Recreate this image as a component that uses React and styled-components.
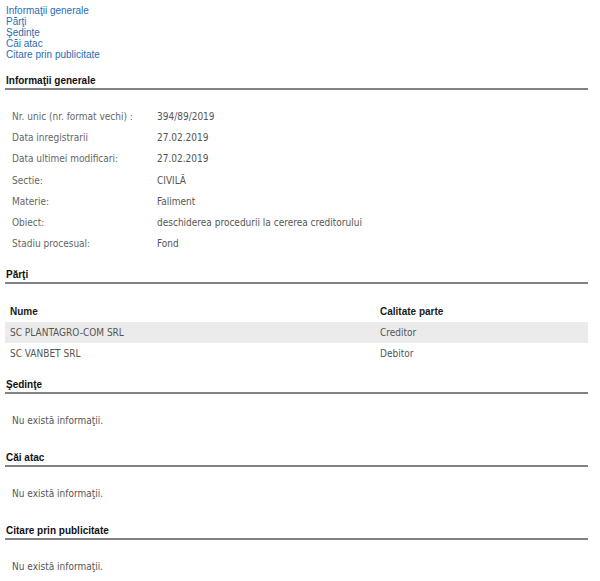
import React from "react";
import styled, { createGlobalStyle } from "styled-components";

const Global = createGlobalStyle`
  html, body { margin: 0; padding: 0; background: #fff; }
  body { font-family: "Liberation Sans", Arial, sans-serif; }
`;

const dataFont = `"DejaVu Sans Condensed", "DejaVu Sans", Tahoma, sans-serif`;

const Page = styled.div`
  padding: 5px 12px 0 5px;
`;

const Nav = styled.nav`
  display: flex;
  flex-direction: column;
  align-items: flex-start;
  padding-left: 1px;
  margin-bottom: 12px;
`;

const NavLink = styled.a`
  font-size: 10px;
  line-height: 11px;
  color: #2a6db5;
  text-decoration: none;
  cursor: pointer;
`;

const Section = styled.section`
  margin-bottom: 12px;
`;

const Heading = styled.h2`
  margin: 0;
  padding: 2px 0 0 1px;
  font-size: 10px;
  line-height: 14px;
  font-weight: bold;
  color: #111;
  border-bottom: 2px solid #828282;
`;

const Body = styled.div`
  margin-top: 16px;
`;

const InfoGrid = styled.div`
  display: grid;
  grid-template-columns: 145px 1fr;
  padding-left: 7px;
`;

const Cell = styled.div`
  font-family: ${dataFont};
  font-stretch: condensed;
  font-size: 10px;
  line-height: 21.2px;
  color: ${(p) => (p.$label ? "#666" : "#555")};
`;

const Table = styled.div`
  display: flex;
  flex-direction: column;
`;

const Row = styled.div`
  display: grid;
  grid-template-columns: 370px 1fr;
  height: ${(p) => (p.$head ? 22 : 21)}px;
  align-items: center;
  padding-left: 5px;
  background: ${(p) => (p.$shade ? "#ebebeb" : "transparent")};
`;

const HeadCell = styled.div`
  font-size: 10px;
  font-weight: bold;
  color: #1a1a1a;
`;

const TCell = styled.div`
  font-family: ${dataFont};
  font-stretch: condensed;
  font-size: 10px;
  color: #555;
`;

const Empty = styled.p`
  margin: 0;
  padding: 0 0 6px 7px;
  font-family: ${dataFont};
  font-stretch: condensed;
  font-size: 10px;
  line-height: 21px;
  color: #555;
`;

const info = [
  ["Nr. unic (nr. format vechi) :", "394/89/2019"],
  ["Data inregistrarii", "27.02.2019"],
  ["Data ultimei modificari:", "27.02.2019"],
  ["Sectie:", "CIVILĂ"],
  ["Materie:", "Faliment"],
  ["Obiect:", "deschiderea procedurii la cererea creditorului"],
  ["Stadiu procesual:", "Fond"],
];

const parti = [
  ["SC PLANTAGRO-COM SRL", "Creditor"],
  ["SC VANBET SRL", "Debitor"],
];

export default function App() {
  return (
    <>
      <Global />
      <Page>
        <Nav>
          <NavLink>Informaţii generale</NavLink>
          <NavLink>Părţi</NavLink>
          <NavLink>Şedinţe</NavLink>
          <NavLink>Căi atac</NavLink>
          <NavLink>Citare prin publicitate</NavLink>
        </Nav>

        <Section>
          <Heading>Informaţii generale</Heading>
          <Body>
            <InfoGrid>
              {info.map(([k, v]) => (
                <React.Fragment key={k}>
                  <Cell $label>{k}</Cell>
                  <Cell>{v}</Cell>
                </React.Fragment>
              ))}
            </InfoGrid>
          </Body>
        </Section>

        <Section>
          <Heading>Părţi</Heading>
          <Body>
            <Table>
              <Row $head>
                <HeadCell>Nume</HeadCell>
                <HeadCell>Calitate parte</HeadCell>
              </Row>
              {parti.map(([n, c], i) => (
                <Row key={n} $shade={i % 2 === 0}>
                  <TCell>{n}</TCell>
                  <TCell>{c}</TCell>
                </Row>
              ))}
            </Table>
          </Body>
        </Section>

        <Section>
          <Heading>Şedinţe</Heading>
          <Body>
            <Empty>Nu există informaţii.</Empty>
          </Body>
        </Section>

        <Section>
          <Heading>Căi atac</Heading>
          <Body>
            <Empty>Nu există informaţii.</Empty>
          </Body>
        </Section>

        <Section>
          <Heading>Citare prin publicitate</Heading>
          <Body>
            <Empty>Nu există informaţii.</Empty>
          </Body>
        </Section>
      </Page>
    </>
  );
}
